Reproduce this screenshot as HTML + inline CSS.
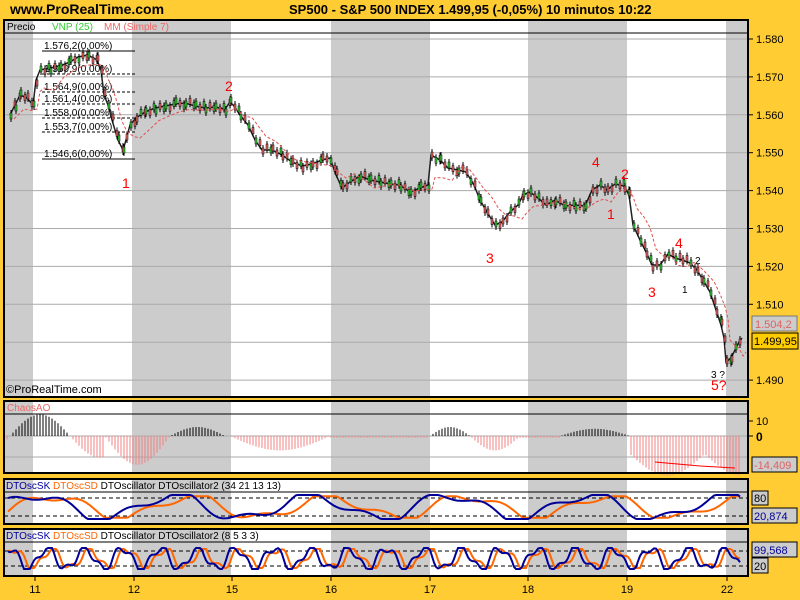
<!DOCTYPE html>
<html><head><meta charset="utf-8"><style>
body{margin:0;width:800px;height:600px;background:#FFCC33;overflow:hidden;font-family:"Liberation Sans",sans-serif}
svg{position:absolute;left:0;top:0}
</style></head><body>
<svg id="s" width="800" height="600" xmlns="http://www.w3.org/2000/svg" font-family="Liberation Sans, sans-serif">
<text x="10" y="14" font-size="14" font-weight="bold">www.ProRealTime.com</text>
<text x="289" y="14" font-size="13" font-weight="bold">SP500 - S&amp;P 500 INDEX    1.499,95 (-0,05%)    10 minutos  10:22</text>
<g id="g"></g>
</svg>
<script>
var g=document.getElementById('g'),h='';
function R(x,y,w,hh,f,s,sw){h+='<rect x="'+x+'" y="'+y+'" width="'+w+'" height="'+hh+'" fill="'+f+'"'+(s?' stroke="'+s+'" stroke-width="'+(sw||1)+'"':'')+'/>';}
function L(x1,y1,x2,y2,c,w,d){h+='<line x1="'+x1+'" y1="'+y1+'" x2="'+x2+'" y2="'+y2+'" stroke="'+c+'" stroke-width="'+(w||1)+'"'+(d?' stroke-dasharray="'+d+'"':'')+'/>';}
function T(x,y,t,c,fs,a){h+='<text x="'+x+'" y="'+y+'" fill="'+(c||'#000')+'" font-size="'+(fs||11)+'"'+(a?' text-anchor="'+a+'"':'')+'>'+t+'</text>';}
var bands=[[4,33],[132,231],[331,430],[528,627],[726,748]];
var panels=[[20,397],[401,473],[479,524],[529,576]];
panels.forEach(function(p){
 R(4,p[0],744,p[1]-p[0],'#fff');
 bands.forEach(function(b){R(b[0],p[0],b[1]-b[0],p[1]-p[0],'#ccc');});
});
var prices=[1.580,1.570,1.560,1.550,1.540,1.530,1.520,1.510,1.490];
function py(p){return 39+(1.580-p)*3790;}
for(var i=0;i<10;i++){var y=39+i*37.9;L(4,y,748,y,'#aaa',1);}
prices.forEach(function(p){var y=py(p);L(748,y,753,y,'#000');T(756,y+4,p.toFixed(3),'#000',11);});
L(4,33,748,33,'#000');
T(7,30,'Precio','#000',10);T(52,30,'VNP (25)','#33cc33',10);T(104,30,'MM (Simple 7)','#ee6666',10);
var fib=[[47,'1.576,2'],[70,'1.569,9'],[88,'1.564,9'],[100,'1.561,4'],[114,'1.558,0'],[128,'1.553,7'],[155,'1.546,6']];
fib.forEach(function(f,i){L(42,f[0]+4,135,f[0]+4,'#000',1,(i==0||i==6)?'':'3,2');T(44,f[0]+2,f[1]+'(0,00%)','#000',10);});
var pts=[[10,115],[15,105],[20,95],[27,98],[33,105],[36,80],[40,70],[50,68],[60,66],[70,62],[78,57],[88,55],[97,60],[101,70],[104,95],[108,105],[112,120],[118,140],[123,150],[126,140],[130,125],[136,118],[145,112],[155,108],[165,106],[175,104],[185,103],[195,106],[205,108],[215,107],[225,109],[230,102],[234,106],[240,115],[248,125],[255,140],[262,150],[272,150],[282,155],[292,162],[302,166],[312,164],[322,160],[330,158],[336,175],[342,188],[350,182],[360,176],[370,180],[380,182],[390,184],[400,185],[410,192],[420,188],[428,185],[431,155],[440,160],[448,168],[458,170],[466,172],[474,185],[480,200],[487,212],[495,225],[502,222],[510,212],[518,205],[523,195],[530,192],[538,198],[546,205],[555,200],[565,206],[575,205],[585,206],[592,190],[600,185],[607,190],[615,184],[624,186],[629,195],[633,225],[640,240],[646,252],[652,265],[660,265],[668,254],[675,258],[682,260],[690,263],[697,270],[703,280],[710,292],[716,310],[721,325],[724,338],[726,362],[731,358],[735,350],[739,342],[742,338]];
var pd='M'+pts.map(function(p){return p[0]+','+p[1];}).join(' L');
h+='<path d="'+pd+'" fill="none" stroke="#222" stroke-width="1.5"/>';
for(var k=0;k<pts.length-1;k++){var a=pts[k],b=pts[k+1];for(var x=a[0];x<b[0];x+=4){var t=(x-a[0])/(b[0]-a[0]);var y=a[1]+(b[1]-a[1])*t+((x*13)%7-3);var up=((x*7)%5)<2;L(x+1,y-6,x+1,y+6,'#000',1);R(x,y-3,2,6,up?'#33cc33':'#ee6666','#000',0.5);}}
var ma='M'+pts.map(function(p,i){var q=pts[Math.max(0,i-3)];return (p[0]+4)+','+((p[1]+q[1])/2+4);}).join(' L');
h+='<path d="'+ma+'" fill="none" stroke="#e05050" stroke-width="1" stroke-dasharray="3,2"/>';
[[122,188,'1','red'],[225,91,'2','red'],[486,263,'3','red'],[592,167,'4','red'],[621,179,'2','red'],[607,219,'1','red'],[648,297,'3','red'],[675,248,'4','red'],[695,264,'2','#000'],[682,293,'1','#000'],[711,378,'3 ?','#000'],[711,390,'5?','red']].forEach(function(l){T(l[0],l[1],l[2],l[3],(l[3]=='red')?14:10);});
h+='<text x="6" y="393" font-size="11">©ProRealTime.com</text>';
R(752,316,45,15,'#ccc','#777');T(755,328,'1.504,2','#e06060',11);
R(752,333,46,16,'#FFCC00','#000');T(754,345,'1.499,95','#000',11);
L(4,414,748,414,'#000');T(7,411,'ChaosAO','#ee6666',10);
L(4,436,748,436,'#aaa');L(4,457,748,457,'#aaa');
for(var x=7;x<742;x+=3){var v;
 v=12*Math.sin((x-10)/60*Math.PI)*(x<105?1:0)+ (x>=105&&x<170?-16*Math.sin((x-105)/65*Math.PI):0)+(x>=170&&x<225?5*Math.sin((x-170)/55*Math.PI):0)+(x>=230&&x<330?-10*Math.sin((x-230)/100*Math.PI)*0.8:0)+(x>=330&&x<430?-1:0)+(x>=430&&x<470?5*Math.sin((x-430)/40*Math.PI):0)+(x>=470&&x<520?-8*Math.sin((x-470)/50*Math.PI):0)+(x>=520&&x<560?-1:0)+(x>=560&&x<630?4*Math.sin((x-560)/70*Math.PI):0)+(x>=630&&x<742?-(10+12*Math.abs(Math.sin((x-630)/112*Math.PI*1.5))):0);
 var y=436-v*1.8;L(x,436,x,y,v>0?'#000':'#f08080',1);}
h+='<polyline points="655,462 700,466 735,468" fill="none" stroke="red" stroke-width="1"/>';
L(748,421,753,421,'#000');T(756,425,'10');L(748,436,753,436,'#000');h+='<text x="756" y="441" font-size="12" font-weight="bold">0</text>';
R(752,457,45,15,'#ccc','#000');T(754,469,'-14,409','#e06060',11);
function dto(top,hdr,bot,hi,lo,label,per,val,vy){
 L(4,hdr,748,hdr,'#000');
 h+='<text x="6" y="'+(hdr-3)+'" font-size="10"><tspan fill="#000099">DTOscSK </tspan><tspan fill="#ff6600">DTOscSD </tspan><tspan>DTOscillator DTOscillator2 '+label+'</tspan></text>';
 L(4,hi,748,hi,'#000',1,'4,3');L(4,lo,748,lo,'#000',1,'4,3');
 var mid=(hi+lo)/2,amp=(lo-hi)/2+3,a='',b='';
 for(var x=8;x<742;x+=2){var s=Math.sin(x/per)+0.4*Math.sin(x/per*2.3+1);var s2=Math.sin((x-per*0.8)/per)+0.4*Math.sin((x-per*0.8)/per*2.3+1);
  a+=x+','+(mid-Math.max(-1,Math.min(1,s))*amp).toFixed(1)+' ';b+=x+','+(mid-Math.max(-1,Math.min(1,s2))*amp*0.9).toFixed(1)+' ';}
 h+='<polyline points="'+b+'" fill="none" stroke="#ff6600" stroke-width="2"/>';
 h+='<polyline points="'+a+'" fill="none" stroke="#000099" stroke-width="2"/>';
 R(752,vy,45,15,'#ccc','#000');T(754,vy+12,val,'#000099',11);
}
dto(479,492,524,498,516,'(34 21 13 13)',22,'20,874',508);
R(752,491,16,14,'#ccc','#000');T(754,502,'80');
dto(529,542,576,551,566,'(8 5 3 3)',6,'99,568',542);
R(752,558,16,15,'#ccc','#000');T(754,570,'20');
panels.forEach(function(p){R(4,p[0],744,p[1]-p[0],'none','#000',2);});
[35,134,232,331,430,528,627,727].forEach(function(x,i){L(x,577,x,581,'#000');T(x,593,['11','12','15','16','17','18','19','22'][i],'#000',11,'middle');});
g.innerHTML=h;
</script>
</body></html>
